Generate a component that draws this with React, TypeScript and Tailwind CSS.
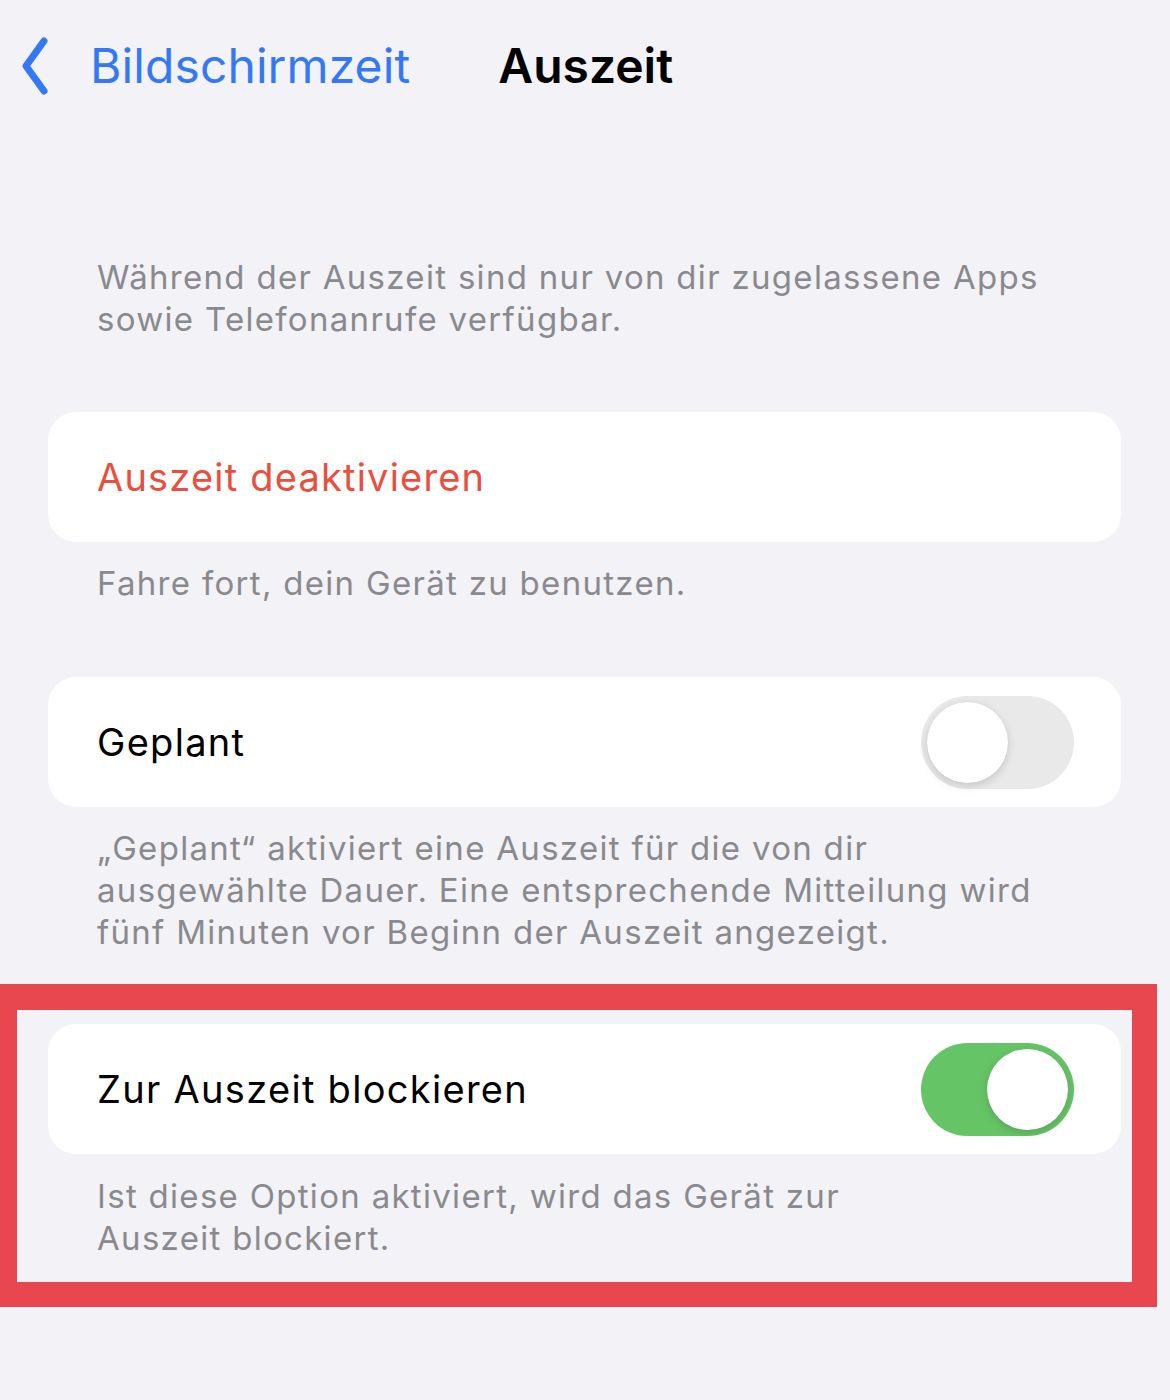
import React from "react";

function Toggle({ on }: { on: boolean }) {
  return (
    <div
      className={
        on
          ? "w-[153px] h-[93px] rounded-full bg-[#65c466] flex items-center justify-end pr-[6px]"
          : "w-[153px] h-[93px] rounded-full bg-[#e9e9ea] flex items-center justify-start pl-[6px]"
      }
    >
      <div className="w-[81px] h-[81px] rounded-full bg-white shadow-[0_3px_8px_rgba(0,0,0,0.15),0_0_1px_rgba(0,0,0,0.1)]" />
    </div>
  );
}

function Footer({ children }: { children: React.ReactNode }) {
  return (
    <p className="pl-[97px] pr-[90px] text-[33px] leading-[42px] text-[#8a8a8e] tracking-[1.3px]">
      {children}
    </p>
  );
}

export default function App() {
  return (
    <div
      className="w-[1170px] h-[1400px] bg-[#f2f2f7] overflow-hidden"
      style={{ fontFamily: "Inter, 'Noto Sans', sans-serif" }}
    >
      {/* Nav bar */}
      <div className="h-[132px] flex items-center">
        <div className="flex items-center pl-[22px] gap-[24px] text-[#3478f6]">
          <svg width="44" height="60" viewBox="0 0 44 60" className="mt-[1px]">
            <path
              d="M22 4 L4 29 L22 54"
              fill="none"
              stroke="#3478f6"
              strokeWidth="7"
              strokeLinecap="round"
              strokeLinejoin="round"
            />
          </svg>
          <span className="text-[48px] tracking-[0.1px]">Bildschirmzeit</span>
        </div>
        <span className="ml-[88px] text-[48px] font-semibold text-black">Auszeit</span>
      </div>

      {/* Description */}
      <div className="pt-[124px]">
        <Footer>
          Während der Auszeit sind nur von dir zugelassene Apps sowie Telefonanrufe verfügbar.
        </Footer>
      </div>

      {/* Disable */}
      <div className="mt-[72px] ml-[48px] w-[1073px] h-[130px] bg-white rounded-[28px] flex items-center pl-[49px]">
        <span className="text-[38px] text-[#eb4e3d] tracking-[1.2px]">Auszeit deaktivieren</span>
      </div>
      <div className="mt-[20px]">
        <Footer>Fahre fort, dein Gerät zu benutzen.</Footer>
      </div>

      {/* Geplant */}
      <div className="mt-[73px] ml-[48px] w-[1073px] h-[130px] bg-white rounded-[28px] flex items-center justify-between pl-[49px] pr-[47px]">
        <span className="text-[38px] text-black tracking-[1.3px]">Geplant</span>
        <Toggle on={false} />
      </div>
      <div className="mt-[20px]">
        <Footer>
          „Geplant“ aktiviert eine Auszeit für die von dir ausgewählte Dauer. Eine entsprechende Mitteilung wird fünf Minuten vor Beginn der Auszeit angezeigt.
        </Footer>
      </div>

      {/* Highlighted block */}
      <div className="mt-[31px] w-[1157px] border-[#e8474f] border-l-[17px] border-t-[26px] border-r-[25px] border-b-[25px] pt-[14px] pb-[23px]">
        <div className="ml-[31px] w-[1073px] h-[130px] bg-white rounded-[28px] flex items-center justify-between pl-[49px] pr-[47px]">
          <span className="text-[38px] text-black tracking-[1.3px]">Zur Auszeit blockieren</span>
          <Toggle on={true} />
        </div>
        <div className="mt-[21px] -ml-[17px]">
          <p className="pl-[97px] pr-[270px] text-[33px] leading-[42px] text-[#8a8a8e] tracking-[1.3px]">
            Ist diese Option aktiviert, wird das Gerät zur Auszeit blockiert.
          </p>
        </div>
      </div>
    </div>
  );
}
